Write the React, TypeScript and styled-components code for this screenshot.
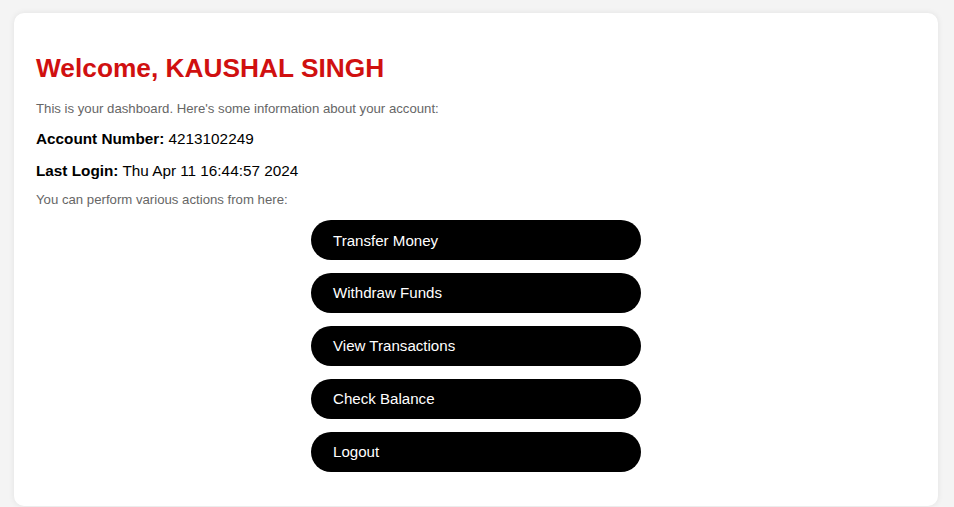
import React from "react";
import styled, { createGlobalStyle } from "styled-components";

const GlobalStyle = createGlobalStyle`
  html, body {
    margin: 0;
    padding: 0;
    background: #f4f4f4;
    font-family: "Liberation Sans", Arial, sans-serif;
  }
`;

const Page = styled.div`
  padding: 13px 16px 2px 14px;
`;

const Card = styled.main`
  background: #ffffff;
  border-radius: 10px;
  box-shadow: 0 0 6px rgba(0, 0, 0, 0.08);
  padding: 40px 22px 34px;
  min-height: 418px;
`;

const Title = styled.h1`
  margin: 0 0 18px;
  font-size: 26.3px;
  line-height: 30px;
  font-weight: 700;
  color: #d01010;
`;

const Note = styled.p<{ $after: number }>`
  margin: 0 0 ${(p) => p.$after}px;
  font-size: 13.2px;
  line-height: 15px;
  color: #666666;
`;

const Info = styled.p<{ $after: number }>`
  margin: 0 0 ${(p) => p.$after}px;
  font-size: 15.3px;
  line-height: 17px;
  color: #000000;

  strong {
    font-weight: 700;
  }
`;

const Actions = styled.nav`
  display: flex;
  flex-direction: column;
  align-items: center;
  gap: 12.9px;
`;

const ActionButton = styled.button`
  box-sizing: border-box;
  width: 330px;
  height: 40px;
  border: none;
  border-radius: 20px;
  background: #000000;
  color: #ffffff;
  font-family: "Liberation Sans", Arial, sans-serif;
  font-size: 15.1px;
  text-align: left;
  padding: 0 22px;
  cursor: pointer;
`;

const actions = [
  "Transfer Money",
  "Withdraw Funds",
  "View Transactions",
  "Check Balance",
  "Logout",
];

export default function App() {
  return (
    <>
      <GlobalStyle />
      <Page>
        <Card>
          <Title>Welcome, KAUSHAL SINGH</Title>
          <Note $after={14}>
            This is your dashboard. Here's some information about your account:
          </Note>
          <Info $after={15}>
            <strong>Account Number:</strong> 4213102249
          </Info>
          <Info $after={13}>
            <strong>Last Login:</strong> Thu Apr 11 16:44:57 2024
          </Info>
          <Note $after={13}>You can perform various actions from here:</Note>
          <Actions>
            {actions.map((a) => (
              <ActionButton key={a}>{a}</ActionButton>
            ))}
          </Actions>
        </Card>
      </Page>
    </>
  );
}
